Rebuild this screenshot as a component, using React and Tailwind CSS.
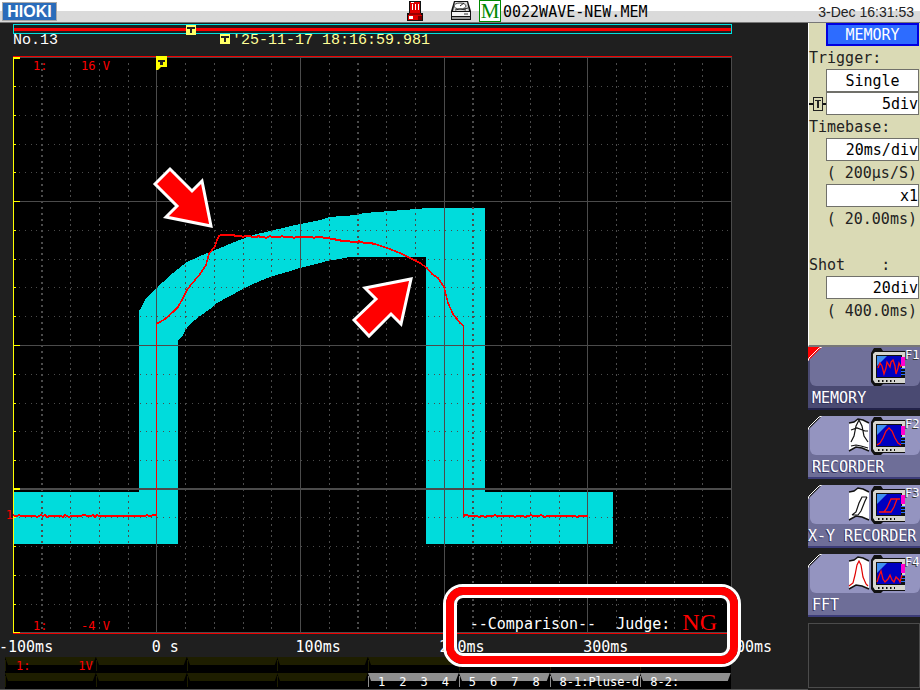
const mono = "font-['DejaVu_Sans_Mono','Liberation_Mono',monospace]"
const wideMono = "font-['Liberation_Mono','DejaVu_Sans_Mono',monospace]"

const timeLabels = ['-100ms', '0 s', '100ms', '200ms', '300ms', '400ms']

const majorX = [156, 300, 444, 587]
const majorY = [201, 345]
const minorX = [42, 70, 99, 128, 185, 214, 243, 271, 329, 358, 386, 415, 473, 501, 530, 559, 616, 645, 674, 702]
const minorY = [86, 115, 144, 172, 230, 259, 287, 316, 374, 403, 431, 460, 517, 546, 575, 604]

const band =
    '13,492 139,492 139,310 140,310 145,300 150,294 156,288 163,282 173,273 183,265 187,262 200,256 210,252 220,248 237,241 253,235 270,231 287,227 300,224 320,220 330,217 342,216 357,215 364,213 390,211 403,210 417,209 426,208 485,208 485,492 613,492 613,544 426,544 426,257 349,257 340,259 327,261 320,263 300,268 287,272 270,277 253,284 243,289 230,296 217,303 210,309 200,316 190,324 185,331 182,337 178,340 178,544 13,544'

const rise =
    '156,324 160,322 165,319 173,312 178,307 182,300 187,290 190,286 200,274 206,265 209,254 215,246 219,235'
const crest = [[219, 235], [243, 236], [260, 237], [320, 237], [333, 239], [343, 241], [370, 243], [375, 244]]
const fall =
    '375,244 387,248 400,253 410,258 420,263 427,268 432,274 438,278 444,287 448,303 453,314 460,323 463,325'

// Small repeatable ripple along a flat part of the trace
const ripple = (points) => {
    const out = []
    for (let i = 0; i < points.length - 1; i++) {
        const [x0, y0] = points[i]
        const [x1, y1] = points[i + 1]
        for (let x = x0; x < x1; x += 2) {
            const y = y0 + ((y1 - y0) * (x - x0)) / (x1 - x0)
            const n = (x * x * 7 + x * 13 + ((x * x * x) % 17)) % 23
            out.push(`${x},${(y + (n > 20 ? -1 : n < 2 ? 1 : 0)).toFixed(1)}`)
        }
    }
    out.push(points[points.length - 1].join(','))
    return out.join(' ')
}

const arrowProps = { fill: '#ff0000', stroke: '#ffffff', strokeWidth: 3, strokeLinejoin: 'miter' }

const Waveform = () => {
    return (
        <svg viewBox="13 56 719 578" className="block w-full h-auto overflow-visible" role="img" aria-label="Waveform">
            <rect x="13" y="56" width="719" height="578" fill="#000" />
            <polygon points={band} fill="#00dcdc" shapeRendering="crispEdges" />

            {/* Grid */}
            <g stroke="#4b4b4b" shapeRendering="crispEdges" fill="none">
                {minorX.map((x) => (
                    <path
                        key={x}
                        d={`M${x === 42 || x === 358 || x === 473 ? x : x + 0.5} 63V632`}
                        strokeWidth={x === 42 || x === 358 || x === 473 ? 2 : 1}
                        strokeDasharray="2 3.76"
                    />
                ))}
                {minorY.map((y) => (
                    <path key={y} d={`M19 ${y + 0.5}H731`} strokeDasharray="1 4.76" />
                ))}
                {majorX.map((x) => (
                    <path key={x} d={`M${x + 0.5} 57V632`} />
                ))}
                {majorY.map((y) => (
                    <path key={y} d={`M13 ${y + 0.5}H731`} />
                ))}
                <path d="M13 489H731" strokeWidth="2" />
                <path d="M13 57.5H731.5V632.5H13" />
                <path d="M13 56.5H732M13 633.5H732" stroke="#f00000" />
            </g>

            {/* Left axis */}
            <g fill="#ffff00" shapeRendering="crispEdges">
                <rect x="13" y="57" width="1" height="576" />
                {minorY.map((y) => <rect key={y} x="13" y={y} width="3" height="1" />)}
                {majorY.map((y) => <rect key={y} x="13" y={y} width="7" height="1" />)}
                <rect x="13" y="57" width="7" height="2" />
                <rect x="13" y="488" width="7" height="2" />
                <rect x="13" y="632" width="7" height="1" />
            </g>

            {/* Measured trace */}
            <g stroke="#ff0000" fill="none" strokeWidth="2" shapeRendering="crispEdges">
                <polyline points={ripple([[13, 516], [157, 516]])} />
                <path d="M156.5 516V324" strokeWidth="1" />
                <polyline points={rise} strokeWidth="1.6" />
                <polyline points={ripple(crest)} />
                <polyline points={fall} strokeWidth="1.6" />
                <path d="M463.5 325V516" strokeWidth="1" stroke="#c01010" />
                <polyline points={ripple([[463, 516], [588, 516]])} />
            </g>

            {/* Trigger flag */}
            <path d="M156 56h11v11h-6l-3 3h-2z" fill="#ffff00" />
            <path d="M158 60h7v2h-2v3h-3v-3h-2z" fill="#222" />

            <polygon points="155,184 170,169 192,191 202,181 211,226 166,217 177,206" {...arrowProps} />
            <polygon points="354,320 369,336 391,314 401,324 411,279 365,288 376,299" {...arrowProps} />
        </svg>
    )
}

const BeaconIcon = () => (
    <svg width="16" height="20" viewBox="0 0 16 20" shapeRendering="crispEdges">
        <path d="M2 0h12v12h2v8H0v-8h2z" fill="#111" />
        <path d="M3 1h10v11H3z" fill="#e00000" />
        <path d="M5 3h1v6H5zM8 3h1v6H8zM11 3h1v6h-1zM4 1h3v1H4z" fill="#fff" />
        <path d="M2 12h12v2H2z" fill="#900" />
        <path d="M1 14h14v5H1z" fill="#e00000" />
        <path d="M2 15h4v3H2z" fill="#fff" />
        <path d="M11 15h4v4h-4z" fill="#700" />
    </svg>
)

const DriveIcon = () => (
    <svg width="20" height="20" viewBox="0 0 20 20">
        <path d="M3 0h14l3 10v9H0V10z" fill="#111" />
        <path d="M4 1h12l2 9H2z" fill="#dcdcdc" />
        <ellipse cx="9" cy="5" rx="6" ry="3" fill="#fff" stroke="#444" />
        <path d="M9 5l4-3M4 9l5-1 6 1M13 8l4-1" stroke="#222" fill="none" />
        <path d="M1 11h18v4H1z" fill="#f4f4f4" />
        <path d="M1 16h18v2H1z" fill="#9a9a9a" />
        <path d="M13 13h4" stroke="#333" />
    </svg>
)

const Header = () => {
    return (
        <header className="h-[23px] flex items-start bg-linear-to-b from-white from-50% to-[#dadada] to-50% border-b border-[#777]">
            <div className="w-[401px] shrink-0 pl-[3px] pt-[3px]">
                <div className="w-[53px] h-[17px] bg-[#2a6cba] outline outline-[#aaa] text-white text-center text-[16px] leading-[17px] font-black font-['Liberation_Sans',sans-serif]">
                    HIOKI
                </div>
            </div>
            <div className="pl-[6px] pt-px"><BeaconIcon /></div>
            <div className="pl-7 pt-px"><DriveIcon /></div>
            <div className="ml-2 w-[22px] h-[22px] bg-white border border-[#008800] text-[#008800] text-center text-[21px] leading-[21px] font-['Liberation_Serif',serif]">
                M
            </div>
            <div className={`pl-[2px] text-[15px] leading-[24px] text-black ${mono}`}>0022WAVE-NEW.MEM</div>
            <div className="ml-auto pr-[6px] whitespace-nowrap text-[14px] leading-[24px] text-[#222] font-['Liberation_Sans',sans-serif]">
                3-Dec 16:31:53
            </div>
        </header>
    )
}

const TriggerBadge = () => (
    <svg width="10" height="10" viewBox="0 0 10 10" className="block">
        <path d="M0 0h10v10H0z" fill="#ffff66" />
        <path d="M1 2h8v2H6v4H4V4H1z" fill="#222" />
    </svg>
)

const channels = [null, null, null, null, '1 2 3 4', '5 6 7 8', '8-1:Pluse-d', '8-2:']

const ChannelStrip = () => {
    return (
        <div className={`ml-[5px] mr-[77px] bg-black text-[12px] ${mono}`}>
            <div className="h-4 grid grid-cols-8 text-[#ff0000]">
                {channels.map((c, i) => (
                    <div key={i} className="relative h-4">
                        <TabShape fill="#1e1e00" />
                        {i === 0 && (
                            <div className="relative flex justify-between pl-[11px] pr-[3px] leading-[18px] whitespace-pre">
                                <span>1:</span>
                                <span>1V</span>
                            </div>
                        )}
                    </div>
                ))}
            </div>
            <div className="h-4 grid grid-cols-8 text-white">
                {channels.map((c, i) => (
                    <div key={i} className="relative h-4">
                        <TabShape fill={c ? '#8f8f8f' : '#1e1e00'} />
                        {c && c.length === 7 ? (
                            <div className="relative flex gap-[14px] pl-[10px] leading-[18px]">
                                {c.split(' ').map((n) => <span key={n}>{n}</span>)}
                            </div>
                        ) : (
                            <div className="relative pl-[10px] leading-[18px] whitespace-nowrap">{c}</div>
                        )}
                    </div>
                ))}
            </div>
        </div>
    )
}

const TabShape = ({ fill }) => (
    <svg viewBox="0 0 91 16" preserveAspectRatio="none" className="absolute inset-0 w-full h-full">
        <path d="M0 0h91l-3 8H3z" fill={fill} />
        <path d="M0 3h1v11H0z" fill={fill} />
    </svg>
)

const FieldRow = ({ id, label, value, center }) => (
    <div className="pl-[17px] h-[23px]">
        <input
            id={id}
            aria-label={label}
            defaultValue={value}
            className={`block w-full h-[23px] pt-px bg-white border border-[#70706a] text-black outline-none ${center ? 'text-center' : 'text-right'}`}
        />
    </div>
)

const NoteRow = ({ children }) => (
    <div className="h-[23px] leading-[25px] pl-[17px] pr-[2px] text-right whitespace-pre">{children}</div>
)

const Settings = () => {
    return (
        <div className={`h-[324px] pr-px border-l border-white border-b-2 border-b-[#777] bg-[#dadab5] text-[#222] text-[15px] ${mono}`}>
            <div className="pl-[17px]">
                <button className="block w-full h-[23px] bg-[#2d6cff] border-2 border-[#0000e0] text-white leading-[20px]">MEMORY</button>
            </div>
            <label htmlFor="mode" className="block h-[23px] leading-[25px]">Trigger:</label>
            <FieldRow id="mode" value="Single" center />
            <div className="flex">
                <svg width="17" height="23" viewBox="0 0 17 23" className="-mr-[17px]" shapeRendering="crispEdges">
                    <path d="M0 12h4M13 12h4" stroke="#111" strokeWidth="2" />
                    <path d="M4.500 5.500h9v13h-9z" fill="none" stroke="#222" />
                    <path d="M6 8.500h6M9 8v8" stroke="#222" fill="none" strokeWidth="1.500" />
                </svg>
                <div className="flex-1"><FieldRow label="Pre-trigger" value="5div" /></div>
            </div>
            <label htmlFor="timebase" className="block h-[23px] leading-[25px]">Timebase:</label>
            <FieldRow id="timebase" value="20ms/div" />
            <NoteRow>( 200µs/S)</NoteRow>
            <FieldRow label="Magnification" value="x1" />
            <NoteRow>( 20.00ms)</NoteRow>
            <label htmlFor="shot" className="block pt-[23px] h-[46px] leading-[25px] whitespace-pre">Shot    :</label>
            <FieldRow id="shot" value="20div" />
            <NoteRow>( 400.0ms)</NoteRow>
        </div>
    )
}

const functionKeys = [
    {
        key: 'F1',
        name: 'MEMORY',
        active: true,
        screen: 'M30 20l2-5 2 3 2 8 2-6 1-6 3 5 1-5 2-2 2 6 1 8 2-6 1-5 2 4',
    },
    {
        key: 'F2',
        name: 'RECORDER',
        screen: 'M29 28l3-2 3-5 3-7 3-3 3 3 3 7 3 5 3 2',
        paper: 'M3 25l3-6 2-10 3-6 3 6 2 10 4 6M3 13l6-2 8 3h3M3 29l5-1 5 1 7 2',
    },
    {
        key: 'F3',
        name: 'X-Y RECORDER',
        screen: 'M31 26h5l3-4 4-9h9M36 26h7l3-5 3-8',
        paper: 'M4 29l4-3 3-9 3-6h5M4 29h6l3-4 4-10 2-4',
    },
    {
        key: 'F4',
        name: 'FFT',
        screen: 'M29 27l2-6 2-5 2 8 2 3 3-3 2-4 2 5 2 2 2-5 3 3 1 2 2-7',
        paper: 'M1 31l4-3 2-8 2-10 2-4 2 4 2 12 3 7 2 2',
        paperColor: '#e00000',
    },
]

const KeyIcon = ({ screen, paper, paperColor = '#111' }) => (
    <svg width="57" height="38" viewBox="0 0 57 38" className="block">
        {paper && (
            <>
                <path d="M1 6l5-1 4-3 5 1 6 3v28l-7-3-6-1-7 4z" fill="#fff" />
                <path d="M1 6l5-1 4-3 5 1 6 3M1 34l7-4 6 1 7 3" fill="none" stroke="#111" strokeWidth="1.500" />
                <path d={paper} fill="none" stroke={paperColor} strokeWidth="1.200" />
            </>
        )}
        <path d="M26 0h7l2 3h22v33H35l-2 2h-7l-3-4V5z" fill="#111" />
        <path d="M27 4h30v31H27l-2-3V6z" fill="#d6d6d0" />
        <path d="M28 7h26v23H28z" fill="#111" />
        <path d="M29 8h24v21H29z" fill="#0000c0" />
        <path d="M29 8h10l-4 4-6 6z" fill="#3f8fef" />
        <path d="M53 9h4v9h-4z" fill="#ff00d0" />
        <path d="M53 20h4v1h-4zM53 23h4v1h-4zM53 26h4v1h-4z" fill="#2a70ff" />
        <path d="M53 21h4v2h-4zM53 24h4v2h-4zM53 27h4v3h-4z" fill="#111" />
        <path d="M30 33h17" stroke="#111" strokeWidth="2" strokeDasharray="1.500 2.500" />
        <path d={screen} fill="none" stroke="#ff1010" strokeWidth="1.300" />
    </svg>
)

const FunctionKey = ({ item }) => {
    const { key, name, active } = item
    const wide = name.length > 10
    return (
        <button
            className={`relative block w-full h-[63px] text-left text-white overflow-hidden border-b-2 ${
                active ? 'bg-[#4a4a72] border-[#22224a]' : 'bg-[#6e6e98] border-[#3c3c78]'
            }`}
        >
            <div className={`h-[39px] ml-[2px] pt-px rounded-b-md flex justify-end ${active ? 'bg-[#70709a]' : 'bg-[#9494c0]'}`}>
                <KeyIcon {...item} />
                <span className="w-[15px] text-[12px] leading-[15px] [text-shadow:-1px_1px_0_#333]">
                    {key}
                </span>
            </div>
            <div className={`text-[15px] leading-[25px] whitespace-nowrap [text-shadow:-1px_1px_0_#333360] ${wide ? 'pl-0' : 'pl-[4px]'}`}>{name}</div>
            <svg width="14" height="14" viewBox="0 0 14 14" className="absolute top-0 left-0">
                <path d="M0 0h14L0 14z" fill={active ? '#ff0000' : '#1f1f1f'} />
                <path d="M14 0L11 1 1 11 0 14" fill="none" stroke="#fff" />
            </svg>
        </button>
    )
}

const App = () => {
    return (
        <div className={`min-h-screen flex flex-col bg-[#1f1f1f] text-white ${mono}`}>
            <Header />
            <div className="flex-1 flex">
                <main className="relative flex-1 min-w-0">
                    {/* Memory overview bar */}
                    <div className="pt-px pl-[13px] pr-[76px]">
                        <div className="relative h-[10px] border border-[#00e0e0] bg-[#1f1f1f] py-[3px]">
                            <div className="h-[3px] bg-[#ff0000]" />
                            <div className="absolute top-0 left-[24%]"><TriggerBadge /></div>
                        </div>
                    </div>
                    <div className={`h-[22px] pl-[13px] flex text-[15px] leading-[14px] ${wideMono}`}>
                        <span className="w-[207px]">No.13</span>
                        <span className="flex text-[#ffff99]">
                            <TriggerBadge />
                            <span className="pl-[2px]">'25-11-17 18:16:59.981</span>
                        </span>
                    </div>

                    {/* Plot with its range and judgement texts */}
                    <div className="relative ml-[13px] mr-[76px]">
                        <Waveform />
                        <div className="absolute inset-0 flex flex-col justify-between text-[#ff0000] text-[12px] leading-4">
                            <div className="pt-[2px] pl-[20px] flex">
                                <span className="w-12">1:</span>
                                <span>16 V</span>
                            </div>
                            <div className="pl-[20px] pr-[15px] flex items-end">
                                <span className="w-12">1:</span>
                                <span>-4 V</span>
                                <span className="ml-auto text-white text-[15px] leading-5">--Comparison--</span>
                                <span className="pl-5 text-white text-[15px] leading-5">Judge:</span>
                                <span className="pl-[12px] text-[24px] leading-6 font-['Liberation_Serif',serif]">NG</span>
                            </div>
                        </div>
                        <div className="absolute top-[78%] right-full text-[#ff0000] text-[12px] leading-4">1</div>
                    </div>

                    <div className="h-[23px] ml-[8px] mr-[81px] flex text-[15px] leading-[27px] whitespace-nowrap">
                        {timeLabels.map((t, i) => (
                            <div key={t} className={i < 5 ? 'w-1/5 shrink-0' : 'w-0'}>
                                <span className={i === 0 ? '-ml-[9px]' : ''}>{t}</span>
                            </div>
                        ))}
                    </div>
                    <ChannelStrip />
                    <div className="h-px bg-[#555]" />

                    {/* Callout ring round the judgement */}
                    <div className="absolute right-[67px] bottom-[23px] w-[298px] h-[83px] rounded-[20px] border-3 border-white pointer-events-none">
                        <div className="w-full h-full rounded-[17px] border-8 border-[#ff0000]">
                            <div className="w-full h-full rounded-[9px] border-3 border-white" />
                        </div>
                    </div>
                </main>

                <aside className="w-28 shrink-0">
                    <Settings />
                    <div className="flex flex-col gap-[6px]">
                        {functionKeys.map((item) => (
                            <FunctionKey key={item.key} item={item} />
                        ))}
                        <div className="h-[65px] border border-[#4b4b4b]" />
                    </div>
                </aside>
            </div>
        </div>
    )
}

export default App
